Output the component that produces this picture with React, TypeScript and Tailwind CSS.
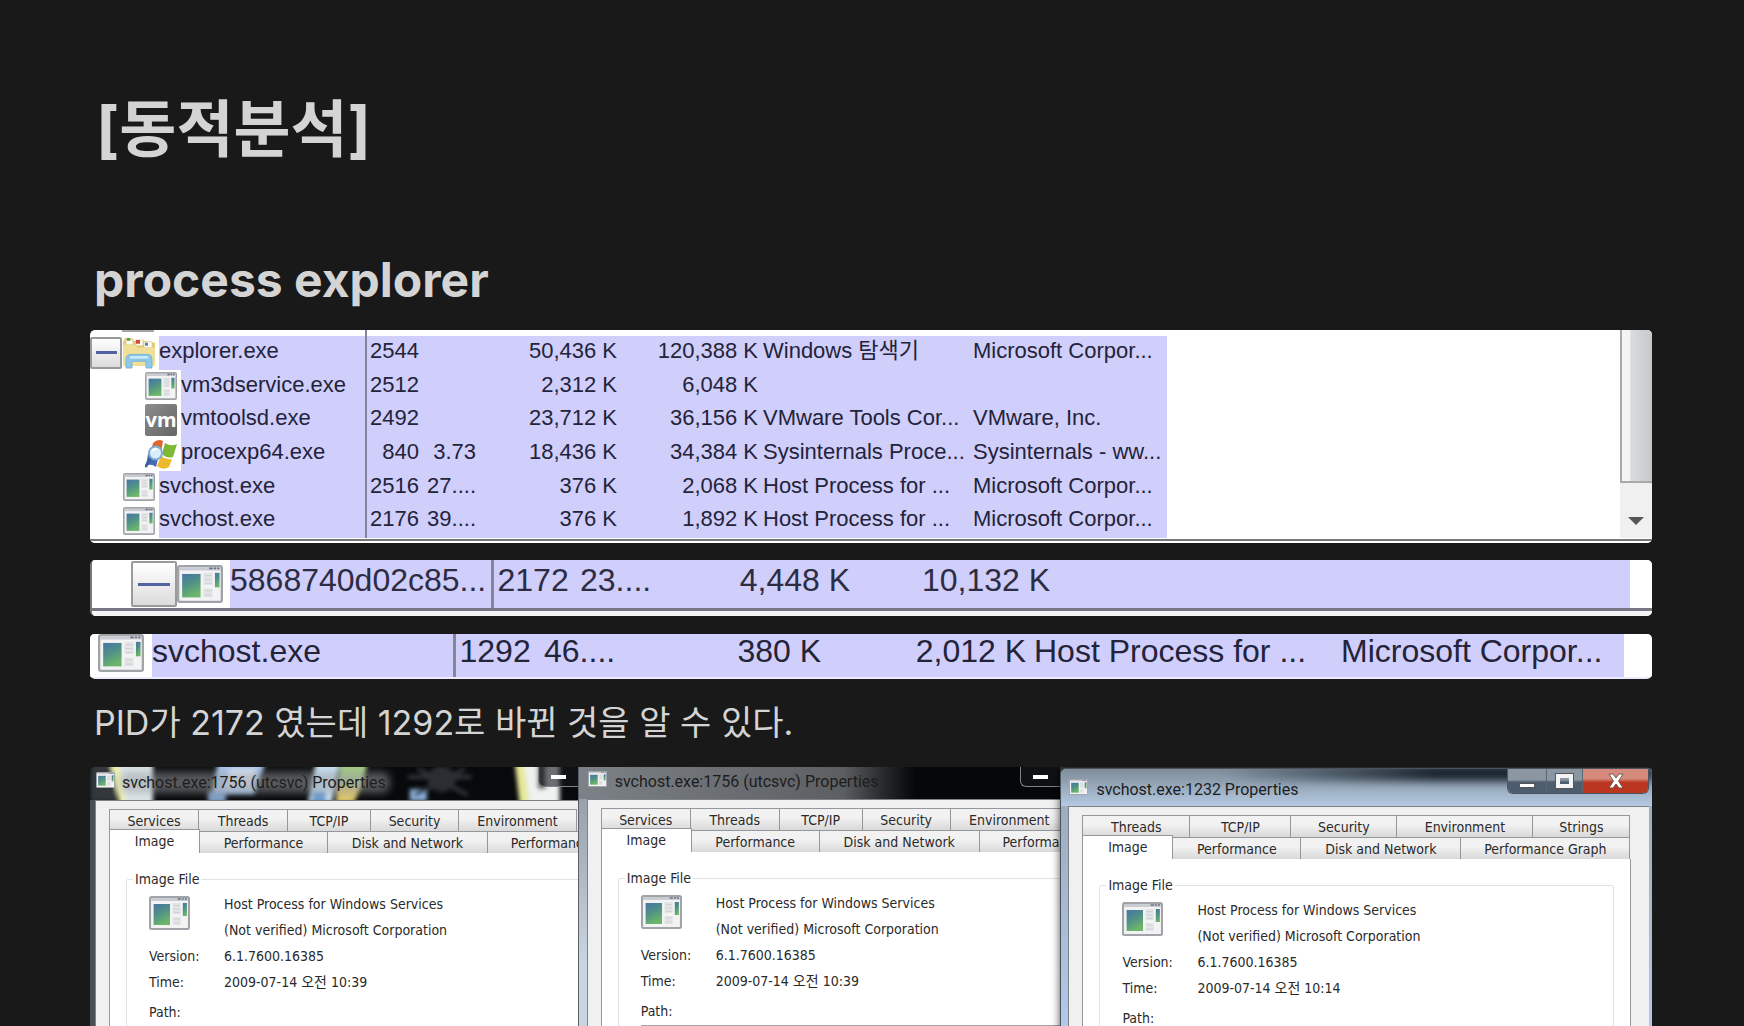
import type { ReactNode } from "react";

const ARIAL = "font-['Liberation_Sans','Noto_Sans_CJK_KR',sans-serif]";
const TAHOMA = "font-['DejaVu_Sans_Condensed','Roboto','Noto_Sans_CJK_KR',sans-serif]";

function AppIcon({ className }: { className: string }) {
  return (
    <svg className={className} viewBox="0 0 40 34" preserveAspectRatio="none" aria-hidden="true">
      <defs>
        <linearGradient id="screen" x1="0" y1="0" x2="0.4" y2="1">
          <stop offset="0" stopColor="#4a74a4" />
          <stop offset="0.5" stopColor="#4f9088" />
          <stop offset="1" stopColor="#6cb56a" />
        </linearGradient>
      </defs>
      <rect x="1" y="1" width="38" height="32" rx="1.5" fill="#f3f3f4" stroke="#a0a3a8" strokeWidth="2" />
      <path d="M2 3.5H38" stroke="#c9ccd3" strokeWidth="3" />
      <path d="M28 3H31M32 3H34M35 3H37" stroke="#6b7080" strokeWidth="1.6" />
      <rect x="4.5" y="8" width="16" height="21" fill="url(#screen)" />
      <rect x="23" y="7" width="8" height="11" fill="#e3e4e6" />
      <rect x="23" y="21" width="8" height="8" fill="#e3e4e6" />
      <path d="M24 9.500H30M24 13H30M24 16.500H30M24 23H30M24 27H30" stroke="#cfd1d5" strokeWidth="1" />
      <rect x="33" y="7" width="4" height="13" fill="url(#screen)" />
    </svg>
  );
}

function FolderIcon() {
  return (
    <svg className="h-[33px] w-[34px]" viewBox="0 0 34 34" preserveAspectRatio="none" aria-hidden="true">
      <path d="M1 6L3 2H10L12 5H22L33 7V28Q33 31 30 31H4Q1 31 1 28Z" fill="#e3cf80" />
      <path d="M4 4H11V9H4ZM14 4H21V10H14ZM22 6H30V12H22Z" fill="#fffdf2" stroke="#d8c47a" strokeWidth="0.6" />
      <path d="M5 2H8V5H5Z" fill="#4ba04e" />
      <path d="M14 4H18V8H14Z" fill="#d24c3d" />
      <path d="M23 7H26V10H23Z" fill="#4d83c9" />
      <path d="M1 9H13L16 12H33V28Q33 31 30 31H4Q1 31 1 28Z" fill="#f0df98" />
      <path d="M4 33V24Q4 19 9 19H25Q30 19 30 24V33H24V26H10V33Z" fill="#8fc9ea" stroke="#68acd5" strokeWidth="0.8" />
      <path d="M8 22H26" stroke="#d3eefb" strokeWidth="2.500" />
    </svg>
  );
}

function ProcexpIcon() {
  return (
    <svg className="h-[30px] w-[32px]" viewBox="0 0 32 30" aria-hidden="true">
      <path d="M8 4Q13-1 18 2L16 13Q11 10 6 13Z" fill="#e0662f" />
      <path d="M20 4Q26 8 32 5L28 18Q22 20 17 15Z" fill="#7db935" />
      <path d="M3 15Q9 12 14 16L11 28Q6 24 1 27Z" fill="#4469b8" />
      <path d="M16 17Q21 21 27 20L24 28Q18 32 12 27Z" fill="#efb92f" />
      <path d="M5 20L1 27" stroke="#3f5f9e" strokeWidth="3" strokeLinecap="round" />
      <circle cx="10.500" cy="14" r="6.500" fill="#d8effb" stroke="#7fa9cf" strokeWidth="2" />
      <path d="M7 12Q9 9 12 10" stroke="#fff" strokeWidth="2" fill="none" />
    </svg>
  );
}

function VmIcon() {
  return (
    <span className="flex h-8 w-8 items-center justify-center rounded-xs bg-linear-to-br from-[#8d8d8d] to-[#666] font-['Noto_Sans',sans-serif] text-xl leading-8 font-bold text-white">
      vm
    </span>
  );
}

function Collapse({ className }: { className: string }) {
  return (
    <button
      type="button"
      aria-label="Collapse"
      className={`${className} flex shrink-0 items-center justify-center rounded-xs border-2 border-[#9a9a9a] bg-linear-to-b from-white to-[#dcdcdc]`}
    >
      <span className="h-[3px] w-3/4 bg-[#5062a0]" />
    </button>
  );
}

type Row = {
  gutter: ReactNode;
  name: string;
  pid: string;
  cpu?: string;
  priv: string;
  work: string;
  desc?: string;
  company?: string;
};

const small = <AppIcon className="h-7 w-8" />;
const nested = (icon: ReactNode) => (
  <span className="flex w-[91px] items-center justify-end bg-white pr-1">{icon}</span>
);
const top = (icon: ReactNode) => (
  <span className="flex w-[69px] items-center justify-end bg-white pr-1">{icon}</span>
);

const rows: Row[] = [
  {
    gutter: (
      <span className="flex w-[69px] items-center bg-white">
        <Collapse className="h-8 w-8" />
        <FolderIcon />
      </span>
    ),
    name: "explorer.exe", pid: "2544", priv: "50,436 K", work: "120,388 K", desc: "Windows 탐색기", company: "Microsoft Corpor...",
  },
  { gutter: nested(small), name: "vm3dservice.exe", pid: "2512", priv: "2,312 K", work: "6,048 K" },
  { gutter: nested(<VmIcon />), name: "vmtoolsd.exe", pid: "2492", priv: "23,712 K", work: "36,156 K", desc: "VMware Tools Cor...", company: "VMware, Inc." },
  { gutter: nested(<ProcexpIcon />), name: "procexp64.exe", pid: "840", cpu: "3.73", priv: "18,436 K", work: "34,384 K", desc: "Sysinternals Proce...", company: "Sysinternals - ww..." },
  { gutter: top(small), name: "svchost.exe", pid: "2516", cpu: "27....", priv: "376 K", work: "2,068 K", desc: "Host Process for ...", company: "Microsoft Corpor..." },
  { gutter: top(small), name: "svchost.exe", pid: "2176", cpu: "39....", priv: "376 K", work: "1,892 K", desc: "Host Process for ...", company: "Microsoft Corpor..." },
];

function ProcessList() {
  return (
    <div className={`${ARIAL} overflow-hidden rounded-[5px] bg-white text-[22px] leading-[30px] text-[#23233a]`}>
      <div className="flex">
        <div className="flex-1">
          <div className="flex h-[6px] w-[277px] border-r-2 border-[#85859a]">
            <span className="ml-8 h-[2px] w-8 bg-[#a5a5a5]" />
          </div>
          <table className="h-[202px] w-[1077px] table-fixed border-collapse bg-[#d0cefb] whitespace-nowrap">
            <colgroup>
              <col className="w-[276px]" />
              <col className="w-[58px]" />
              <col className="w-[56px]" />
              <col className="w-[141px]" />
              <col className="w-[141px]" />
              <col className="w-[211px]" />
              <col />
            </colgroup>
            <tbody>
              {rows.map((r, i) => (
                <tr key={i} className="h-[33px] align-top">
                  <td className="h-px border-r-2 border-[#85859a] p-0">
                    <div className="flex h-full items-stretch">
                      {r.gutter}
                      <span>{r.name}</span>
                    </div>
                  </td>
                  <td className="p-0 pr-[5px] text-right">{r.pid}</td>
                  <td className="p-0 pr-1 text-right">{r.cpu}</td>
                  <td className="p-0 pr-1 text-right">{r.priv}</td>
                  <td className="p-0 pr-1 text-right">{r.work}</td>
                  <td className="p-0 pl-px">{r.desc}</td>
                  <td className="p-0">{r.company}</td>
                </tr>
              ))}
            </tbody>
          </table>
        </div>
        <div className="flex w-8 flex-col bg-[#f0f0f0]">
          <div className="h-[153px] border-b-2 border-l-2 border-[#a9a9ab] bg-linear-to-r from-[#f3f3f3] from-25% via-[#dadbdc] via-30% to-[#c6c8cb]" />
          <svg className="mx-auto mt-[34px] h-2 w-4" viewBox="0 0 16 8" aria-hidden="true">
            <path d="M0 0H16L8 8Z" fill="#555" />
          </svg>
        </div>
      </div>
      <div className="mt-px h-[2px] bg-[#777]" />
      <div className="h-[2px] bg-white" />
    </div>
  );
}

function FirstProcess() {
  return (
    <div className={`${ARIAL} overflow-hidden rounded-[5px] border-l-2 border-[#77777a] bg-white text-[32px] leading-10 text-[#2c2c42]`}>
      <div className="bg-white pr-[22px]">
        <table className="h-12 w-full table-fixed border-collapse bg-[#d0cefb] whitespace-nowrap">
          <colgroup>
            <col className="w-[400px]" />
            <col className="w-[80px]" />
            <col className="w-[80px]" />
            <col className="w-[198px]" />
            <col className="w-[200px]" />
            <col />
          </colgroup>
          <tbody>
            <tr>
              <td className="border-r-[3px] border-[#85859a] p-0">
                <div className="flex h-12">
                  <span className="flex w-[138px] shrink-0 items-center bg-white pl-[39px]">
                    <Collapse className="h-[46px] w-[46px]" />
                    <AppIcon className="h-[38px] w-[46px]" />
                  </span>
                  <span>5868740d02c85...</span>
                </div>
              </td>
              <td className="p-0 pb-2 pl-1">2172</td>
              <td className="p-0 pb-2 pl-2">23....</td>
              <td className="p-0 pb-2 text-right">4,448 K</td>
              <td className="p-0 pb-2 text-right">10,132 K</td>
              <td className="p-0" />
            </tr>
          </tbody>
        </table>
      </div>
      <div className="h-[3px] bg-[#777783]" />
      <div className="h-[5px] bg-[#f4f4f4]" />
    </div>
  );
}

function SecondProcess() {
  return (
    <div className={`${ARIAL} overflow-hidden rounded-[5px] bg-[#ecebfd] pb-[2px] text-[32px] leading-[34px] text-[#23233a]`}>
      <div className="bg-white pr-7">
        <table className="h-[43px] w-full table-fixed border-collapse bg-[#d0cefb] whitespace-nowrap">
          <colgroup>
            <col className="w-[364px]" />
            <col className="w-[82px]" />
            <col className="w-[85px]" />
            <col className="w-[200px]" />
            <col className="w-[205px]" />
            <col className="w-[315px]" />
            <col />
          </colgroup>
          <tbody>
            <tr className="align-top">
              <td className="border-r-[3px] border-[#85859a] p-0">
                <div className="flex h-[43px]">
                  <span className="w-[62px] shrink-0 bg-white pl-2">
                    <AppIcon className="h-[38px] w-[46px]" />
                  </span>
                  <span>svchost.exe</span>
                </div>
              </td>
              <td className="p-0 pl-1">1292</td>
              <td className="p-0 pl-2">46....</td>
              <td className="p-0 text-right">380 K</td>
              <td className="p-0 text-right">2,012 K</td>
              <td className="p-0 pl-2">Host Process for ...</td>
              <td className="p-0">Microsoft Corpor...</td>
            </tr>
          </tbody>
        </table>
      </div>
    </div>
  );
}

type Tab = [label: string, width: string];

const tabClass =
  "shrink-0 border border-b-0 border-l-0 border-[#94979b] bg-linear-to-b from-[#f2f2f2] from-40% to-[#d9d9d9] text-center first:border-l";

function PropertiesBody({ upper, lower, time }: { upper: Tab[]; lower: Tab[]; time: string }) {
  return (
    <div className="flex-1 border-t border-l border-[#7d8288] bg-[#f0f0f0] pt-2 pr-[18px] pl-[13px] text-sm leading-5 text-[#2a2a2a]">
      <div role="tablist" className="whitespace-nowrap">
        <div className="flex h-[22px]">
          {upper.map(([label, w]) => (
            <button key={label} type="button" role="tab" className={`${tabClass} ${w}`}>
              {label}
            </button>
          ))}
        </div>
        <div className="flex h-[22px]">
          <button
            type="button"
            role="tab"
            aria-selected="true"
            className="relative -mt-[2px] w-[91px] shrink-0 border border-b-0 border-[#94979b] bg-white pb-px"
          >
            Image
          </button>
          {lower.map(([label, w]) => (
            <button key={label} type="button" role="tab" className={`${tabClass} ${w}`}>
              {label}
            </button>
          ))}
        </div>
      </div>
      <div className="h-[400px] border-l border-r border-[#94979b] bg-white px-4 pt-4">
        <fieldset className="h-[360px] rounded-xs border border-[#dfe3e4] pl-[22px]">
          <legend className="-ml-4 px-[2px]">Image File</legend>
          <div className="mt-[2px] grid grid-cols-[75px_1fr] whitespace-nowrap">
            <div className="row-span-2 pt-[5px]">
              <AppIcon className="h-[34px] w-[41px]" />
            </div>
            <span className="leading-[26px]">Host Process for Windows Services</span>
            <span className="leading-[26px]">(Not verified) Microsoft Corporation</span>
            <span className="leading-[26px]">Version:</span>
            <span className="leading-[26px]">6.1.7600.16385</span>
            <span className="leading-[26px]">Time:</span>
            <span className="leading-[26px]">{time}</span>
            <label className="mt-1 leading-[26px]">Path:</label>
          </div>
          <input aria-label="Path" readOnly className="mt-px w-full border-t-2 border-[#a5a5a5]" />
        </fieldset>
      </div>
    </div>
  );
}

const wideUpper: Tab[] = [
  ["Services", "w-[90px]"],
  ["Threads", "w-[89px]"],
  ["TCP/IP", "w-[83px]"],
  ["Security", "w-[88px]"],
  ["Environment", "w-[118px]"],
];
const lowerTabs: Tab[] = [
  ["Performance", "w-[128px]"],
  ["Disk and Network", "w-[160px]"],
  ["Performance Graph", "w-[169px]"],
];
const lastUpper: Tab[] = [
  ["Threads", "w-[108px]"],
  ["TCP/IP", "w-[101px]"],
  ["Security", "w-[106px]"],
  ["Environment", "w-[136px]"],
  ["Strings", "w-[97px]"],
];

function MinimizeStub() {
  return (
    <button type="button" aria-label="Minimize" className="ml-auto h-5 w-10 shrink-0 self-start rounded-bl-md border border-t-0 border-r-0 border-[#80848a] bg-[#15181c]/60">
      <span className="mx-auto block h-1 w-[15px] bg-white" />
    </button>
  );
}

function Title({ children }: { children: ReactNode }) {
  return (
    <>
      <AppIcon className="h-4 w-[19px] shrink-0" />
      <h3 className="relative font-['Roboto',sans-serif] text-base leading-[22px] whitespace-nowrap">{children}</h3>
    </>
  );
}

function Wallpaper() {
  return (
    <svg className="absolute inset-0 h-full w-full" viewBox="0 0 488 33" preserveAspectRatio="none" aria-hidden="true">
      <defs>
        <filter id="soft" x="-20%" y="-50%" width="140%" height="200%">
          <feGaussianBlur stdDeviation="2" />
        </filter>
        <filter id="glow" x="-20%" y="-50%" width="140%" height="200%">
          <feGaussianBlur stdDeviation="4" />
        </filter>
      </defs>
      <rect width="488" height="33" fill="#07090b" />
      <g filter="url(#soft)">
        <rect x="0" y="-5" width="26" height="40" fill="#33373a" />
        <path d="M20-5H63V38H30Z" fill="#dde6ea" />
        <path d="M20-5H29L36 38H30Z" fill="#eef0b0" />
        <path d="M128-5H176L164 27H122Z" fill="#a9c6ec" />
        <path d="M140 2H166L161 20H134Z" fill="#dbe7fa" />
        <rect x="118" y="24" width="18" height="12" fill="#7f9fc4" />
        <path d="M226-5H250L242 36H218Z" fill="#c8e2f4" />
        <rect x="222" y="24" width="14" height="12" fill="#6f9fd0" />
        <path d="M250-5H278L272 20H248Z" fill="#a5cc84" />
        <path d="M247 18H272L264 36H246Z" fill="#dcc66c" />
        <rect x="320" y="22" width="17" height="12" fill="#8eb4dd" />
        <path d="M318 10H382M328 2L378 28M375 2L325 28" stroke="#30353a" strokeWidth="4" />
        <ellipse cx="352" cy="12" rx="14" ry="13" fill="#2a2f33" />
        <path d="M425-5H470V38H432Z" fill="#eef2f0" />
        <path d="M425-5H434L440 38H430Z" fill="#e6e89a" />
        <rect x="448" y="-4" width="8" height="26" fill="#4a4446" />
      </g>
      <rect x="30" y="5" width="270" height="21" rx="8" fill="#9a9da0" opacity="0.55" filter="url(#glow)" />
    </svg>
  );
}

function Windows() {
  return (
    <div className={`${TAHOMA} flex overflow-hidden rounded-t-[5px] bg-[#363a3e] text-[#1d1d1d]`}>
      <section className="flex min-w-0 flex-[488] flex-col overflow-hidden bg-[#4a4e52]">
        <div className="relative flex h-[33px] bg-[#07090b] pt-[5px] pl-[6px]">
          <Wallpaper />
          <div className="relative flex min-w-0 flex-1 gap-[7px]">
            <Title>svchost.exe:1756 (utcsvc) Properties</Title>
            <div className="-mt-[5px] ml-auto flex">
              <MinimizeStub />
            </div>
          </div>
        </div>
        <div className="flex flex-1 pl-[5px]">
          <PropertiesBody upper={wideUpper} lower={lowerTabs} time="2009-07-14 오전 10:39" />
        </div>
      </section>
      <section className="flex min-w-0 flex-[482] flex-col overflow-hidden border-l border-[#5b6067] bg-linear-to-b from-[#8e98a2] to-[#c9d5e0] to-40%">
        <div className="flex h-8 gap-2 bg-linear-to-r from-[#7d8288] via-[#5c5f62] via-55% to-[#050708] to-70% pt-1 pl-[9px]">
          <Title>svchost.exe:1756 (utcsvc) Properties</Title>
          <div className="-mt-1 ml-auto flex">
            <MinimizeStub />
          </div>
        </div>
        <div className="flex flex-1 pl-2">
          <PropertiesBody upper={wideUpper} lower={lowerTabs} time="2009-07-14 오전 10:39" />
        </div>
      </section>
      <section className="relative mt-px flex min-w-0 flex-[588] flex-col rounded-tl-md border-t border-l border-[#4c5259] bg-linear-to-b from-[#9aa9b8] to-[#b5cdf0] to-60% pr-[3px] shadow-[0_0_9px_rgba(0,0,0,0.7)]">
        <div className="relative -mr-[3px] flex h-[37px] gap-2 overflow-hidden rounded-tl-md bg-linear-to-b from-[#7f8c9a] to-[#b4cae2] pt-[10px] pl-2">
          <span className="absolute -top-1 right-0 left-40 h-4 bg-linear-to-r from-transparent via-[#17222c] to-[#17222c] blur-xs" />
          <Title>svchost.exe:1232 Properties</Title>
          <div className="relative -mt-[10px] mr-[3px] ml-auto flex h-[25px] overflow-hidden rounded-b-md border border-t-0 border-[#4b5563]">
            <button type="button" aria-label="Minimize" className="flex w-[39px] justify-center border-r border-[#5c6673] bg-linear-to-b from-[#8b96a3] from-45% to-[#4e5d6e] to-55% pt-[14px]">
              <span className="h-[5px] w-4 border border-[#555] bg-white" />
            </button>
            <button type="button" aria-label="Maximize" className="flex w-9 justify-center border-r border-[#5c6673] bg-linear-to-b from-[#8b96a3] from-45% to-[#4e5d6e] to-55% pt-[5px]">
              <span className="h-[14px] w-[17px] border-4 border-[#f4f4f4] outline outline-[#555]" />
            </button>
            <button type="button" aria-label="Close" className="flex w-[65px] items-center justify-center bg-linear-to-b from-[#d58a7c] from-40% to-[#bb3620] to-55%">
              <svg className="h-4 w-4" viewBox="0 0 16 16" aria-hidden="true">
                <path d="M1 1H5L8 5L11 1H15L10.500 8L15 15H11L8 11L5 15H1L5.500 8Z" fill="#fff" stroke="#5f4440" strokeWidth="0.8" />
              </svg>
            </button>
          </div>
        </div>
        <div className="flex flex-1 pl-[7px]">
          <PropertiesBody upper={lastUpper} lower={lowerTabs} time="2009-07-14 오전 10:14" />
        </div>
      </section>
    </div>
  );
}

export default function App() {
  return (
    <main className="h-screen overflow-hidden bg-[#191919] pr-[92px] pl-[90px] font-['Inter','Noto_Sans_CJK_KR',sans-serif] text-[#d4d4d4]">
      <h1 className="pt-[90px] pl-[6px] text-[62px] leading-[80px] font-bold">[동적분석]</h1>
      <h2 className="mt-[76px] pl-1 text-[48px] leading-[68px] font-bold">process explorer</h2>
      <div className="mt-4">
        <ProcessList />
      </div>
      <div className="mt-[17px]">
        <FirstProcess />
      </div>
      <div className="mt-[18px]">
        <SecondProcess />
      </div>
      <p className="py-5 pl-1 text-[34px] leading-[48px]">PID가 2172 였는데 1292로 바뀐 것을 알 수 있다.</p>
      <Windows />
    </main>
  );
}
